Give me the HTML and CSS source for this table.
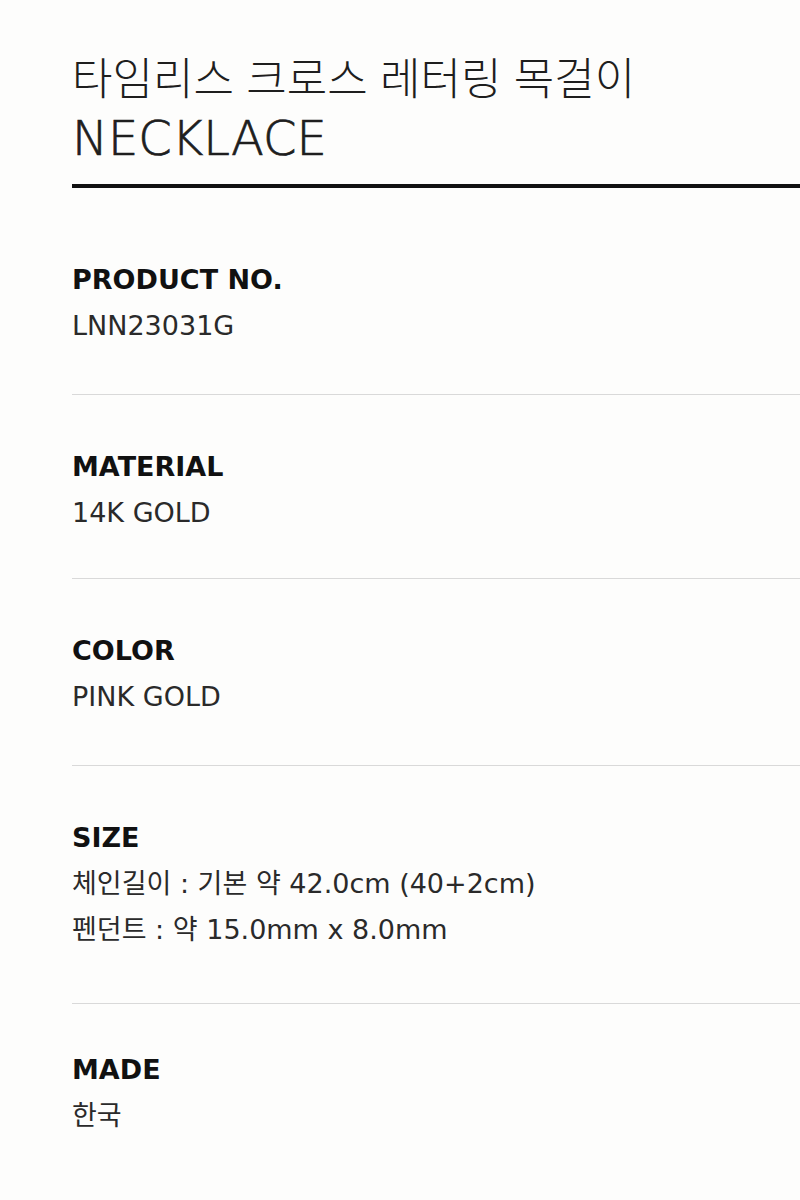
FILE: index.html
```html
<!DOCTYPE html>
<html lang="ko">
<head>
<meta charset="utf-8">
<link rel="stylesheet" href="styles.css">
</head>
<body>
<div class="page">
  <header class="title">
    <div class="title-ko">타임리스 크로스 레터링 목걸이</div>
    <div class="title-en">NECKLACE</div>
  </header>
  <section class="info first">
    <div class="label">PRODUCT NO.</div>
    <div class="value">LNN23031G</div>
  </section>
  <section class="info">
    <div class="label">MATERIAL</div>
    <div class="value">14K GOLD</div>
  </section>
  <section class="info roomy">
    <div class="label">COLOR</div>
    <div class="value">PINK GOLD</div>
  </section>
  <section class="info tall">
    <div class="label">SIZE</div>
    <div class="value">체인길이 : 기본 약 42.0cm (40+2cm)</div>
    <div class="value">펜던트 : 약 15.0mm x 8.0mm</div>
  </section>
  <section class="info last">
    <div class="label">MADE</div>
    <div class="value">한국</div>
  </section>
</div>
</body>
</html>
```
FILE: styles.css
```css
html, body {
  margin: 0;
  padding: 0;
  background: #fdfdfc;
}
body {
  font-family: "DejaVu Sans", "Noto Sans CJK KR", sans-serif;
  color: #1e1e1e;
}
.page {
  padding-left: 72px;
}
.title {
  padding-top: 45px;
  padding-bottom: 15px;
  border-bottom: 4px solid #111;
}
.title-ko, .title-en {
  line-height: 62px;
}
.title-ko {
  font-family: "Noto Sans CJK KR", sans-serif;
  font-size: 44px;
  font-weight: 300;
}
.title-en {
  font-family: "DejaVu Sans", sans-serif;
  font-size: 48px;
  font-weight: 200;
  -webkit-text-stroke: 0.7px #1e1e1e;
}
.info {
  padding: 49px 0 42px;
  border-top: 1px solid #d9d9d9;
}
.info.first {
  border-top: none;
  padding-top: 69px;
  padding-bottom: 45px;
}
.info.roomy {
  padding-bottom: 45px;
}
.info.tall {
  padding-top: 49px;
  padding-bottom: 50px;
}
.info.last {
  padding-top: 43px;
}
.label {
  font-size: 27px;
  line-height: 46px;
  font-weight: 700;
  color: #111;
}
.value {
  font-size: 27px;
  line-height: 46px;
  font-weight: 400;
  color: #2a2a2a;
}
```
